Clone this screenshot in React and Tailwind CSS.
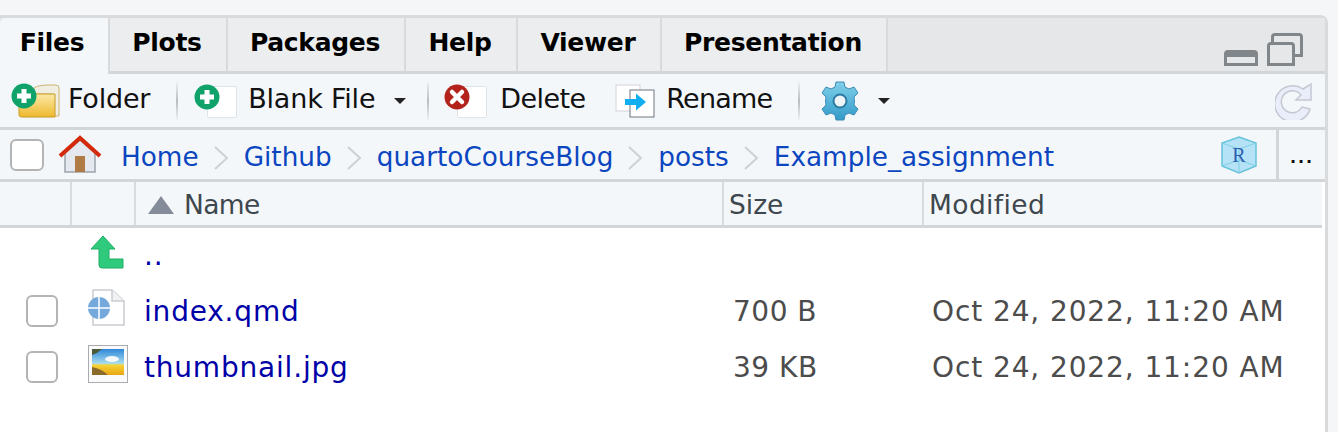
import React from "react";

const tabs = [
  { name: "Plots", w: "w-[118px]" },
  { name: "Packages", w: "w-[178px]" },
  { name: "Help", w: "w-[112px]" },
  { name: "Viewer", w: "w-[144px]" },
  { name: "Presentation", w: "w-[226px]" },
];

const crumbs = ["Home", "Github", "quartoCourseBlog", "posts", "Example_assignment"];

function PlusBadge() {
  return (
    <svg width="26" height="26" viewBox="0 0 26 26" className="absolute left-0 top-0">
      <circle cx="13" cy="13" r="12.5" fill="#0fa36b" />
      <path d="M10.5 6h5v4.500H20v5h-4.500V20h-5v-4.500H6v-5h4.500z" fill="#fff" />
    </svg>
  );
}

function FolderIcon() {
  return (
    <span className="relative w-[48px] h-[34px] block">
      <svg width="48" height="34" viewBox="0 0 48 34" className="absolute left-0 top-0">
        <defs>
          <linearGradient id="folderFill" x1="0" y1="0" x2="0" y2="1">
            <stop offset="0" stopColor="#fbe9a6" />
            <stop offset="1" stopColor="#eeb92f" />
          </linearGradient>
        </defs>
        <path d="M22 4 Q26 1 36 1 H44 Q47 1 47 4 V32 H40 V10 H22z" fill="#f0ede2" stroke="#c9b471" />
        <path d="M7 10 H43 V33 H10 Q7 33 7 31z" fill="url(#folderFill)" stroke="#c99a25" />
      </svg>
      <span className="absolute left-[-1px] top-[-1px] w-[26px] h-[26px] block">
        <PlusBadge />
      </span>
    </span>
  );
}

function BlankFileIcon({ badge }) {
  return (
    <span className="relative w-[44px] h-[34px] block">
      <span className="absolute left-[13px] top-[2px] w-[30px] h-[32px] bg-white border border-[#dfe3ea] rounded-[2px]" />
      {badge === "plus" ? (
        <PlusBadge />
      ) : (
        <svg width="26" height="26" viewBox="0 0 26 26" className="absolute left-0 top-0">
          <circle cx="13" cy="13" r="12.500" fill="#b3231c" />
          <path d="M8 8 L18 18 M18 8 L8 18" stroke="#fff" strokeWidth="4.500" strokeLinecap="round" />
        </svg>
      )}
    </span>
  );
}

function RenameIcon() {
  return (
    <svg width="40" height="34" viewBox="0 0 40 34" className="block">
      <rect x="1" y="1" width="24" height="26" fill="#fff" stroke="#cfd3da" />
      <rect x="15" y="6" width="24" height="27" fill="#fff" stroke="#6f7680" />
      <path d="M10 15 H21 V9.500 L31 18 L21 26.500 V21 H10z" fill="#11aef0" />
    </svg>
  );
}

function GearIcon() {
  return (
    <svg width="40" height="40" viewBox="0 0 40 40" className="block">
      <defs>
        <linearGradient id="gearFill" x1="0" y1="0" x2="0" y2="1">
          <stop offset="0" stopColor="#7fd0ea" />
          <stop offset="1" stopColor="#349ac8" />
        </linearGradient>
      </defs>
      <path
        d="M16 1h8l1 5 4 2 5-2 4 6-4 4 .5 4-.5 4 4 4-4 6-5-2-4 2-1 5h-8l-1-5-4-2-5 2-4-6 4-4-.5-4 .5-4-4-4 4-6 5 2 4-2z"
        fill="url(#gearFill)"
        stroke="#3a8db5"
        strokeLinejoin="round"
      />
      <circle cx="20" cy="20" r="6.500" fill="#eef3f6" stroke="#2a7ba3" strokeWidth="2" />
    </svg>
  );
}

function Caret() {
  return <span className="block w-0 h-0 border-x-[6.5px] border-x-transparent border-t-[6px] border-t-[#222]" />;
}

function Sep() {
  return <span className="block w-[2px] h-[38px] bg-gradient-to-b from-[#eef0f2] via-[#b9bdc1] to-[#eef0f2]" />;
}

function RefreshIcon() {
  return (
    <svg width="38" height="38" viewBox="0 0 38 38" className="block">
      <path
        d="M28 7 L36 2 V18 H21 L26 13 A11 11 0 1 0 27 25 L35 27 A18 18 0 1 1 28 7z"
        fill="#e9eefa"
        stroke="#c3c8d2"
        strokeWidth="1.500"
      />
    </svg>
  );
}

function HomeIcon() {
  return (
    <svg width="44" height="40" viewBox="0 0 44 40" className="block">
      <path d="M7 18 L22 5 L37 18 V37 H7z" fill="#e6e8ef" stroke="#9aa3ab" strokeWidth="1.500" />
      <rect x="17" y="21" width="10" height="16" fill="#b07a45" />
      <path d="M2 21 L22 3 L42 21" fill="none" stroke="#d32a0c" strokeWidth="4" />
    </svg>
  );
}

function ProjectIcon() {
  return (
    <svg width="38" height="38" viewBox="0 0 38 38" className="block">
      <path d="M19 1 L36 7 V30 L19 37 L2 30 V7z" fill="#b5e2f7" stroke="#66c3da" strokeWidth="1.500" />
      <path d="M2 7 L19 13 L36 7 M19 13 V37 M2 30 L19 24 L36 30" fill="none" stroke="#7dcfe2" strokeWidth="1" />
      <text x="19" y="26" textAnchor="middle" fontFamily="Liberation Serif, serif" fontSize="20" fill="#2a5fb0">
        R
      </text>
    </svg>
  );
}

function UpIcon() {
  return (
    <svg width="34" height="34" viewBox="0 0 34 34" className="block">
      <path d="M13 1 L25 14 H19 V24 H33 V33 H12 Q9 33 9 30 V14 H1z" fill="#2fca7c" stroke="#1fae66" strokeLinejoin="round" />
    </svg>
  );
}

function QmdIcon() {
  return (
    <svg width="40" height="38" viewBox="0 0 40 38" className="block">
      <path d="M6 1 H25 L37 12 V36 H6z" fill="#fff" stroke="#c9ccd1" strokeWidth="1.500" />
      <path d="M25 1 V12 H37" fill="#f1f2f4" stroke="#c9ccd1" strokeWidth="1.500" />
      <circle cx="12" cy="19" r="11" fill="#75a9dc" />
      <path d="M12 8 V30 M1 19 H23" stroke="#fff" strokeWidth="1.500" />
    </svg>
  );
}

function ImageIcon() {
  return (
    <svg width="40" height="38" viewBox="0 0 40 38" className="block">
      <defs>
        <linearGradient id="skyFill" x1="0" y1="0" x2="0" y2="1">
          <stop offset="0" stopColor="#2f87d8" />
          <stop offset="0.55" stopColor="#a5dcef" />
          <stop offset="0.62" stopColor="#f6d335" />
          <stop offset="1" stopColor="#e9a514" />
        </linearGradient>
      </defs>
      <rect x="0.500" y="0.500" width="39" height="37" fill="#fafafa" stroke="#a9acb0" />
      <rect x="4" y="4" width="32" height="26" fill="url(#skyFill)" />
      <path d="M4 4 H14 Q10 8 4 10z" fill="#4d5a3a" />
      <ellipse cx="24" cy="14" rx="7" ry="3" fill="#f4f8fb" />
      <path d="M4 22 Q14 24 20 30 H4z" fill="#8a6a2a" />
    </svg>
  );
}

function Crumb() {
  return (
    <svg width="45" height="24" viewBox="0 0 45 24" className="block">
      <path d="M16 1 L28 12 L16 23" fill="none" stroke="#cdd0d4" strokeWidth="2" />
    </svg>
  );
}

function Check({ className = "" }) {
  return <span className={`block rounded-[6px] border-2 border-[#b4b4b4] bg-white ${className}`} />;
}

function FileRow({ icon, name, size, modified, check = true, iconPad = "pl-[8px]" }) {
  return (
    <div className="flex h-[56px] items-center tracking-[0.9px]">
      <div className="w-[72px] flex justify-center pl-[11px] pb-[3px]">{check && <Check className="w-[32px] h-[32px]" />}</div>
      <div className={`w-[64px] flex justify-center pb-[8px] ${iconPad}`}>{icon}</div>
      <div className="w-[588px] pl-[8px] text-[#0000a8] tracking-[0.8px]">{name}</div>
      <div className="w-[200px] pl-[9px] text-[#4c4c4c] tracking-[0.5px]">{size}</div>
      <div className="flex-1 pl-[8px] text-[#4c4c4c] whitespace-nowrap">{modified}</div>
    </div>
  );
}

export default function App() {
  return (
    <div className="h-[432px] w-[1338px] bg-[#f5f6f8] pt-[15px] pr-[10px] overflow-hidden text-[28px] font-['DejaVu_Sans',sans-serif]">
      <div className="h-[417px] bg-white border-t-[3px] border-r-[3px] border-[#d8dadc] rounded-tr-[8px] flex flex-col">
        {/* tabs */}
        <div className="h-[56px] flex bg-[#e6e7e9] border-b-[3px] border-[#d3d6d8] text-[#000] font-bold text-[25px] tracking-[-0.3px]">
          <div className="w-[110px] h-[56px] bg-[#f4f7f9] border-r-[2px] border-[#d8dadc] flex items-center justify-center pb-[6px] pr-[4px] z-10 rounded-tl-[6px]">
            Files
          </div>
          {tabs.map((tab) => (
            <div
              key={tab.name}
              className={`${tab.w} bg-[#ecedef] border-r-[2px] border-[#d8dadc] flex items-center justify-center pb-[4px] pr-[2px]`}
            >
              {tab.name}
            </div>
          ))}
          <div className="flex-1 relative">
            <span className="absolute right-[67px] top-[32px] w-[34px] h-[16px] border-[3px] border-t-[7px] border-[#80868a] rounded-t-[4px]" />
            <span className="absolute right-[22px] top-[15px] w-[32px] h-[24px] border-[3px] border-[#80868a] rounded-t-[4px]" />
            <span className="absolute right-[30px] top-[24px] w-[28px] h-[24px] border-[3px] border-[#80868a] rounded-t-[4px] bg-[#e6e7e9]" />
          </div>
        </div>

        {/* toolbar */}
        <div className="h-[56px] flex items-center bg-[#f4f7f9] border-b-[3px] border-[#d3d6d8] text-[#111] pl-[12px] pr-[12px] text-[27px] tracking-[-0.2px]">
          <FolderIcon />
          <span className="ml-[8px] pb-[2px]">Folder</span>
          <span className="ml-[26px] flex"><Sep /></span>
          <span className="ml-[16px] flex"><BlankFileIcon badge="plus" /></span>
          <span className="ml-[10px] pb-[2px]">Blank File</span>
          <span className="ml-[19px] flex"><Caret /></span>
          <span className="ml-[21px] flex"><Sep /></span>
          <span className="ml-[15px] flex"><BlankFileIcon badge="x" /></span>
          <span className="ml-[12px] pb-[2px] w-[84px] tracking-[-0.6px]">Delete</span>
          <span className="ml-[31px] flex"><RenameIcon /></span>
          <span className="ml-[11px] pb-[2px] w-[105px] tracking-[-0.8px]">Rename</span>
          <span className="ml-[27px] flex"><Sep /></span>
          <span className="ml-[20px] flex"><GearIcon /></span>
          <span className="ml-[18px] flex"><Caret /></span>
          <span className="ml-auto flex"><RefreshIcon /></span>
        </div>

        {/* path bar */}
        <div className="h-[52px] flex items-center bg-[#f4f7f9] border-b-[3px] border-[#d3d6d8]">
          <Check className="w-[34px] h-[32px] ml-[10px]" />
          <span className="ml-[14px] flex"><HomeIcon /></span>
          <div className="ml-[19px] pt-[6px] flex items-center text-[#0b46c0] text-[26.3px]">
            {crumbs.map((crumb, i) => (
              <React.Fragment key={crumb}>
                {i > 0 && <Crumb />}
                <span>{crumb}</span>
              </React.Fragment>
            ))}
          </div>
          <span className="ml-auto flex"><ProjectIcon /></span>
          <div className="ml-[18px] w-[49px] h-full border-l-[3px] border-[#d3d6d8] flex items-end justify-center pb-[13px] text-[#111] text-[16px] font-bold leading-none tracking-[2px]">
            ...
          </div>
        </div>

        {/* table header */}
        <div className="h-[46px] mr-[3px] flex bg-[#f4f7f9] border-b-[3px] border-[#d3d6d8] text-[#3e474e] text-[26.5px]">
          <div className="w-[72px] border-r-[2px] border-[#d8dadc]" />
          <div className="w-[64px] border-r-[2px] border-[#d8dadc]" />
          <div className="w-[588px] border-r-[2px] border-[#d8dadc] flex items-center pl-[12px] gap-[10px] pt-[2px]">
            <span className="block w-0 h-0 border-x-[13px] border-x-transparent border-b-[18px] border-b-[#858c99]" />
            <span className="tracking-[-0.6px]">Name</span>
          </div>
          <div className="w-[200px] border-r-[2px] border-[#d8dadc] flex items-center pl-[5px] pt-[2px]">Size</div>
          <div className="flex-1 flex items-center pl-[5px] pt-[2px] tracking-[0.4px]">Modified</div>
        </div>

        {/* rows */}
        <FileRow check={false} icon={<UpIcon />} name=".." size="" modified="" iconPad="pl-[5px]" />
        <FileRow icon={<QmdIcon />} name="index.qmd" size="700 B" modified="Oct 24, 2022, 11:20 AM" iconPad="pl-[5px]" />
        <FileRow icon={<ImageIcon />} name="thumbnail.jpg" size="39 KB" modified="Oct 24, 2022, 11:20 AM" />
      </div>
    </div>
  );
}
